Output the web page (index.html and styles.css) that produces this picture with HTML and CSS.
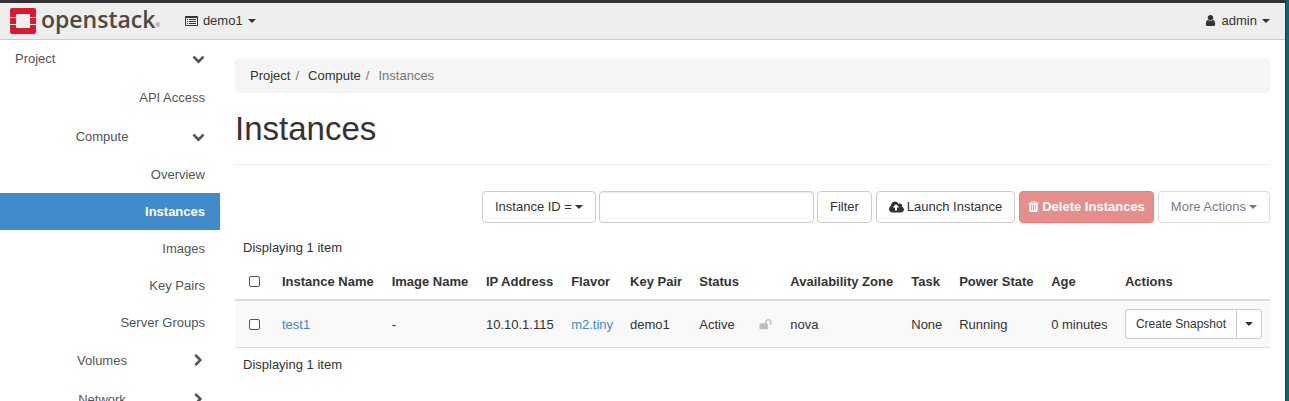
FILE: index.html
```
<!DOCTYPE html>
<html lang="en">
<head>
    <meta charset="UTF-8">
    <meta name="viewport" content="width=device-width, initial-scale=1.0">
    <title>Instances - OpenStack Dashboard</title>
    <link rel="stylesheet" href="styles.css">
</head>
<body>
    <div class="window">
        <header class="navbar">
            <a class="brand" href="#">
                <svg class="brand-mark" viewBox="0 0 26 26" aria-hidden="true">
                    <path d="M2 0h22q2 0 2 2v7h-6v-2q0-1-1-1h-12q-1 0-1 1v2h-6v-7q0-2 2-2zM0 10h6v6h-6zM20 10h6v6h-6zM0 17h6v2q0 1 1 1h12q1 0 1-1v-2h6v7q0 2-2 2h-22q-2 0-2-2z"/>
                </svg>
                <span class="brand-name">openstack</span><span class="brand-dot">®</span>
            </a>
            <button type="button" class="nav-button">
                <svg class="icon-list" viewBox="0 0 13 10" aria-hidden="true">
                    <path d="M1 0h11q1 0 1 1v8q0 1-1 1h-11q-1 0-1-1v-8q0-1 1-1zM1 2v7h11v-7zM2 3h1v1h-1zM4 3h7v1h-7zM2 5h1v1h-1zM4 5h7v1h-7zM2 7h1v1h-1zM4 7h7v1h-7z" fill-rule="evenodd"/>
                </svg>
                demo1
                <span class="caret"></span>
            </button>
            <button type="button" class="nav-button nav-user">
                <svg class="icon" viewBox="0 0 1792 1792" aria-hidden="true">
                    <path d="M1536 1399q0 109-62.500 187t-150.500 78h-854q-88 0-150.500-78t-62.500-187q0-85 8.500-160.500t31.500-152 58.500-131 94-89 134.500-34.500q131 128 313 128t313-128q76 0 134.500 34.500t94 89 58.500 131 31.500 152 8.500 160.500zm-256-887q0 159-112.500 271.500t-271.500 112.500-271.500-112.500-112.500-271.500 112.500-271.500 271.500-112.500 271.500 112.500 112.500 271.500z"/>
                </svg>
                admin
                <span class="caret"></span>
            </button>
        </header>

        <div class="layout">
            <nav class="sidebar">
                <a class="nav-heading nav-top" href="#">
                    <span>Project</span>
                    <svg class="icon" viewBox="0 0 1792 1792" aria-hidden="true"><path d="M1683 808l-742 741q-19 19-45 19t-45-19l-742-741q-19-19-19-45.500t19-45.500l166-165q19-19 45-19t45 19l531 531 531-531q19-19 45-19t45 19l166 165q19 19 19 45.500t-19 45.500z"/></svg>
                </a>
                <a class="nav-heading nav-single" href="#"><span>API Access</span></a>
                <a class="nav-heading" href="#">
                    <span>Compute</span>
                    <svg class="icon" viewBox="0 0 1792 1792" aria-hidden="true"><path d="M1683 808l-742 741q-19 19-45 19t-45-19l-742-741q-19-19-19-45.500t19-45.500l166-165q19-19 45-19t45 19l531 531 531-531q19-19 45-19t45 19l166 165q19 19 19 45.500t-19 45.500z"/></svg>
                </a>
                <a class="nav-item" href="#">Overview</a>
                <a class="nav-item active" href="#">Instances</a>
                <a class="nav-item" href="#">Images</a>
                <a class="nav-item" href="#">Key Pairs</a>
                <a class="nav-item" href="#">Server Groups</a>
                <a class="nav-heading" href="#">
                    <span>Volumes</span>
                    <svg class="icon" viewBox="0 0 1792 1792" aria-hidden="true"><path d="M1363 877l-742 742q-19 19-45 19t-45-19l-166-166q-19-19-19-45t19-45l531-531-531-531q-19-19-19-45t19-45l166-166q19-19 45-19t45 19l742 742q19 19 19 45t-19 45z"/></svg>
                </a>
                <a class="nav-heading" href="#">
                    <span>Network</span>
                    <svg class="icon" viewBox="0 0 1792 1792" aria-hidden="true"><path d="M1363 877l-742 742q-19 19-45 19t-45-19l-166-166q-19-19-19-45t19-45l531-531-531-531q-19-19-19-45t19-45l166-166q19-19 45-19t45 19l742 742q19 19 19 45t-19 45z"/></svg>
                </a>
            </nav>

            <main class="content">
                <ol class="breadcrumb">
                    <li><a href="#">Project</a></li>
                    <li><a href="#">Compute</a></li>
                    <li class="current">Instances</li>
                </ol>
                <h1>Instances</h1>

                <form class="toolbar">
                    <div class="filter">
                        <button type="button" class="btn">Instance ID = <span class="caret"></span></button>
                        <input type="text" class="filter-input" aria-label="Filter value">
                        <button type="button" class="btn">Filter</button>
                    </div>
                    <button type="button" class="btn">
                        <svg class="icon-cloud" viewBox="0 0 1920 1792" aria-hidden="true"><path d="M1280 928q0-14-9-23l-352-352q-9-9-23-9t-23 9l-351 351q-10 12-10 24 0 14 9 23t23 9h224v352q0 13 9.500 22.500t22.500 9.500h192q13 0 22.500-9.500t9.500-22.500v-352h224q13 0 22.500-9.500t9.500-22.500zm640 288q0 159-112.500 271.500t-271.500 112.500h-1088q-185 0-316.500-131.500t-131.500-316.500q0-130 70-240t188-165q-2-30-2-43 0-212 150-362t362-150q156 0 285.500 87t188.500 231q71-62 166-62 106 0 181 75t75 181q0 76-41 138 130 31 213.500 135.500t83.500 238.500z"/></svg>
                        Launch Instance
                    </button>
                    <button type="button" class="btn btn-danger" disabled>
                        <svg class="icon-trash" viewBox="192 0 1408 1792" aria-hidden="true"><path d="M704 1376v-704q0-14-9-23t-23-9h-64q-14 0-23 9t-9 23v704q0 14 9 23t23 9h64q14 0 23-9t9-23zm256 0v-704q0-14-9-23t-23-9h-64q-14 0-23 9t-9 23v704q0 14 9 23t23 9h64q14 0 23-9t9-23zm256 0v-704q0-14-9-23t-23-9h-64q-14 0-23 9t-9 23v704q0 14 9 23t23 9h64q14 0 23-9t9-23zm-544-992h448l-48-117q-7-9-17-11h-317q-10 2-17 11zm928 32v64q0 14-9 23t-23 9h-96v948q0 83-47 143.500t-113 60.500h-832q-66 0-113-58.500t-47-141.500v-952h-96q-14 0-23-9t-9-23v-64q0-14 9-23t23-9h309l70-167q15-37 54-63t79-26h320q40 0 79 26t54 63l70 167h309q14 0 23 9t9 23z"/></svg>
                        Delete Instances
                    </button>
                    <button type="button" class="btn" disabled>More Actions <span class="caret"></span></button>
                </form>

                <p class="table-count">Displaying 1 item</p>
                <table class="instances">
                    <thead>
                        <tr>
                            <th class="col-check"><input type="checkbox" aria-label="Select all"></th>
                            <th>Instance Name</th>
                            <th>Image Name</th>
                            <th>IP Address</th>
                            <th>Flavor</th>
                            <th>Key Pair</th>
                            <th class="col-status">Status</th>
                            <th class="col-lock"></th>
                            <th>Availability Zone</th>
                            <th>Task</th>
                            <th>Power State</th>
                            <th>Age</th>
                            <th class="col-actions">Actions</th>
                        </tr>
                    </thead>
                    <tbody>
                        <tr>
                            <td class="col-check"><input type="checkbox" aria-label="Select test1"></td>
                            <td><a href="#">test1</a></td>
                            <td>-</td>
                            <td>10.10.1.115</td>
                            <td><a href="#">m2.tiny</a></td>
                            <td>demo1</td>
                            <td>Active</td>
                            <td class="col-lock">
                                <svg class="icon" viewBox="0 0 1792 1792" aria-hidden="true"><path d="M1728 576v256q0 26-19 45t-45 19h-64q-26 0-45-19t-19-45v-256q0-106-75-181t-181-75-181 75-75 181v192h96q40 0 68 28t28 68v576q0 40-28 68t-68 28h-960q-40 0-68-28t-28-68v-576q0-40 28-68t68-28h672v-192q0-185 131.500-316.500t316.500-131.500 316.500 131.500 131.500 316.500z"/></svg>
                            </td>
                            <td>nova</td>
                            <td>None</td>
                            <td>Running</td>
                            <td>0 minutes</td>
                            <td class="col-actions">
                                <div class="btn-group">
                                    <button type="button" class="btn btn-sm">Create Snapshot</button>
                                    <button type="button" class="btn btn-sm btn-toggle" aria-label="More actions"><span class="caret"></span></button>
                                </div>
                            </td>
                        </tr>
                    </tbody>
                </table>
                <p class="table-count">Displaying 1 item</p>
            </main>
        </div>
    </div>
</body>
</html>
```
FILE: styles.css
```
* {
    box-sizing: border-box;
}
body {
    margin: 0;
    padding-right: 3px;
    background-color: #006a6b;
    font-family: "Liberation Sans", Arial, sans-serif;
    font-size: 13px;
    line-height: 19px;
    color: #333;
}
a {
    color: #428bca;
    text-decoration: none;
}
button,
input {
    font: inherit;
    color: inherit;
}
.window {
    display: flex;
    flex-direction: column;
    height: 100vh;
    overflow: hidden;
    background-color: #fff;
    border-top: 3px solid #323136;
    border-right: 1px solid #1b3b3d;
}
.icon {
    width: 13px;
    height: 13px;
    fill: currentColor;
}
.caret {
    display: inline-block;
    border-top: 4px solid;
    border-left: 4px solid transparent;
    border-right: 4px solid transparent;
    vertical-align: middle;
}

/* Top bar */
.navbar {
    display: flex;
    flex-shrink: 0;
    align-items: center;
    height: 37px;
    padding: 0 15px 1px 10px;
    background-color: #eee;
    border-bottom: 1px solid #ccc;
}
.brand {
    display: flex;
    align-items: center;
    margin-right: 25px;
    color: #4f4a40;
}
.brand-mark {
    width: 26px;
    height: 26px;
    margin-right: 5px;
    fill: #da1a32;
}
.brand-name {
    padding-bottom: 3px;
    font-family: "Open Sans", sans-serif;
    font-size: 23px;
    font-weight: 600;
    line-height: 30px;
}
.brand-dot {
    align-self: flex-end;
    padding-bottom: 4px;
    font-size: 6px;
    line-height: 16px;
}
.nav-button {
    display: flex;
    align-items: center;
    gap: 5px;
    padding: 0;
    border: none;
    background: none;
    cursor: pointer;
}
.nav-user {
    margin-left: auto;
}
.icon-list {
    width: 13px;
    height: 10px;
    fill: currentColor;
}

/* Side menu */
.layout {
    display: flex;
    flex: 1;
}
.sidebar {
    flex: 0 0 220px;
}
.nav-heading,
.nav-item {
    display: flex;
    align-items: center;
    justify-content: flex-end;
    height: 37px;
    padding: 0 15px;
    color: #555;
}
.nav-heading {
    gap: 3px;
    height: 39px;
    padding-bottom: 1px;
}
.nav-heading span {
    flex: 1;
    text-align: center;
}
.nav-top {
    height: 38px;
}
.nav-top span {
    text-align: left;
}
.nav-single span {
    text-align: right;
}
.nav-item.active {
    background-color: #428bca;
    color: #fff;
    font-weight: bold;
}

/* Main area */
.content {
    flex: 1;
    padding: 18px 15px 0;
}
.breadcrumb {
    display: flex;
    margin: 0;
    padding: 8px 15px;
    list-style: none;
    background-color: #f5f5f5;
    border-radius: 4px;
}
.breadcrumb a {
    color: #333;
}
.breadcrumb li + li::before {
    content: "/";
    padding: 0 9px 0 5px;
    color: #777;
}
.breadcrumb .current {
    color: #777;
}
h1 {
    margin: 18px 0 26px;
    padding-bottom: 17px;
    border-bottom: 1px solid #eee;
    font-size: 33px;
    font-weight: normal;
    line-height: 36px;
}
.toolbar {
    display: flex;
    justify-content: flex-end;
    gap: 4px;
}
.filter {
    display: flex;
    gap: 3px;
}
.filter-input {
    width: 215px;
    padding: 0 12px;
    border: 1px solid #ccc;
    border-radius: 4px;
    box-shadow: inset 0 1px 1px rgba(0, 0, 0, 0.08);
}
.btn {
    display: flex;
    align-items: center;
    justify-content: center;
    gap: 3px;
    height: 32px;
    padding: 0 12px 1px;
    background-color: #fff;
    border: 1px solid #ccc;
    border-radius: 4px;
    white-space: nowrap;
    cursor: pointer;
}
.btn:disabled {
    opacity: 0.65;
    cursor: not-allowed;
}
.btn-danger {
    padding: 0 8px 1px;
    background-color: #d9534f;
    border-color: #d43f3a;
    color: #fff;
    font-weight: bold;
}
.icon-cloud {
    width: 15px;
    height: 14px;
    fill: currentColor;
}
.icon-trash {
    width: 11px;
    height: 13px;
    fill: currentColor;
}

/* Instances table */
.table-count {
    margin: 0;
    padding: 7px 8px;
}
.toolbar + .table-count {
    padding-top: 15px;
}
.instances {
    width: 100%;
    border-collapse: separate;
    border-spacing: 0;
}
.instances th,
.instances td {
    padding: 8px;
    text-align: left;
    white-space: nowrap;
}
.instances th {
    border-bottom: 2px solid #ddd;
}
.instances td {
    background-color: #f9f9f9;
    border-bottom: 1px solid #ddd;
}
.instances .col-check {
    width: 39px;
    padding: 8px 14px;
}
.col-check input {
    display: block;
    appearance: none;
    width: 11px;
    height: 11px;
    margin: 0;
    background-color: #fff;
    border: 1px solid #555;
    border-radius: 2px;
}
.col-check input:checked {
    background-color: #428bca;
}
.col-status {
    width: 60px;
}
.col-lock {
    width: 31px;
    color: #bbb;
}
.col-lock .icon {
    display: block;
}
.col-actions {
    width: 152px;
}
.btn-group {
    display: flex;
}
.btn-sm {
    height: 30px;
    padding: 0 10px;
    font-size: 12px;
    border-radius: 3px 0 0 3px;
}
.btn-toggle {
    padding: 0 8px;
    margin-left: -1px;
    border-radius: 0 3px 3px 0;
}
```
